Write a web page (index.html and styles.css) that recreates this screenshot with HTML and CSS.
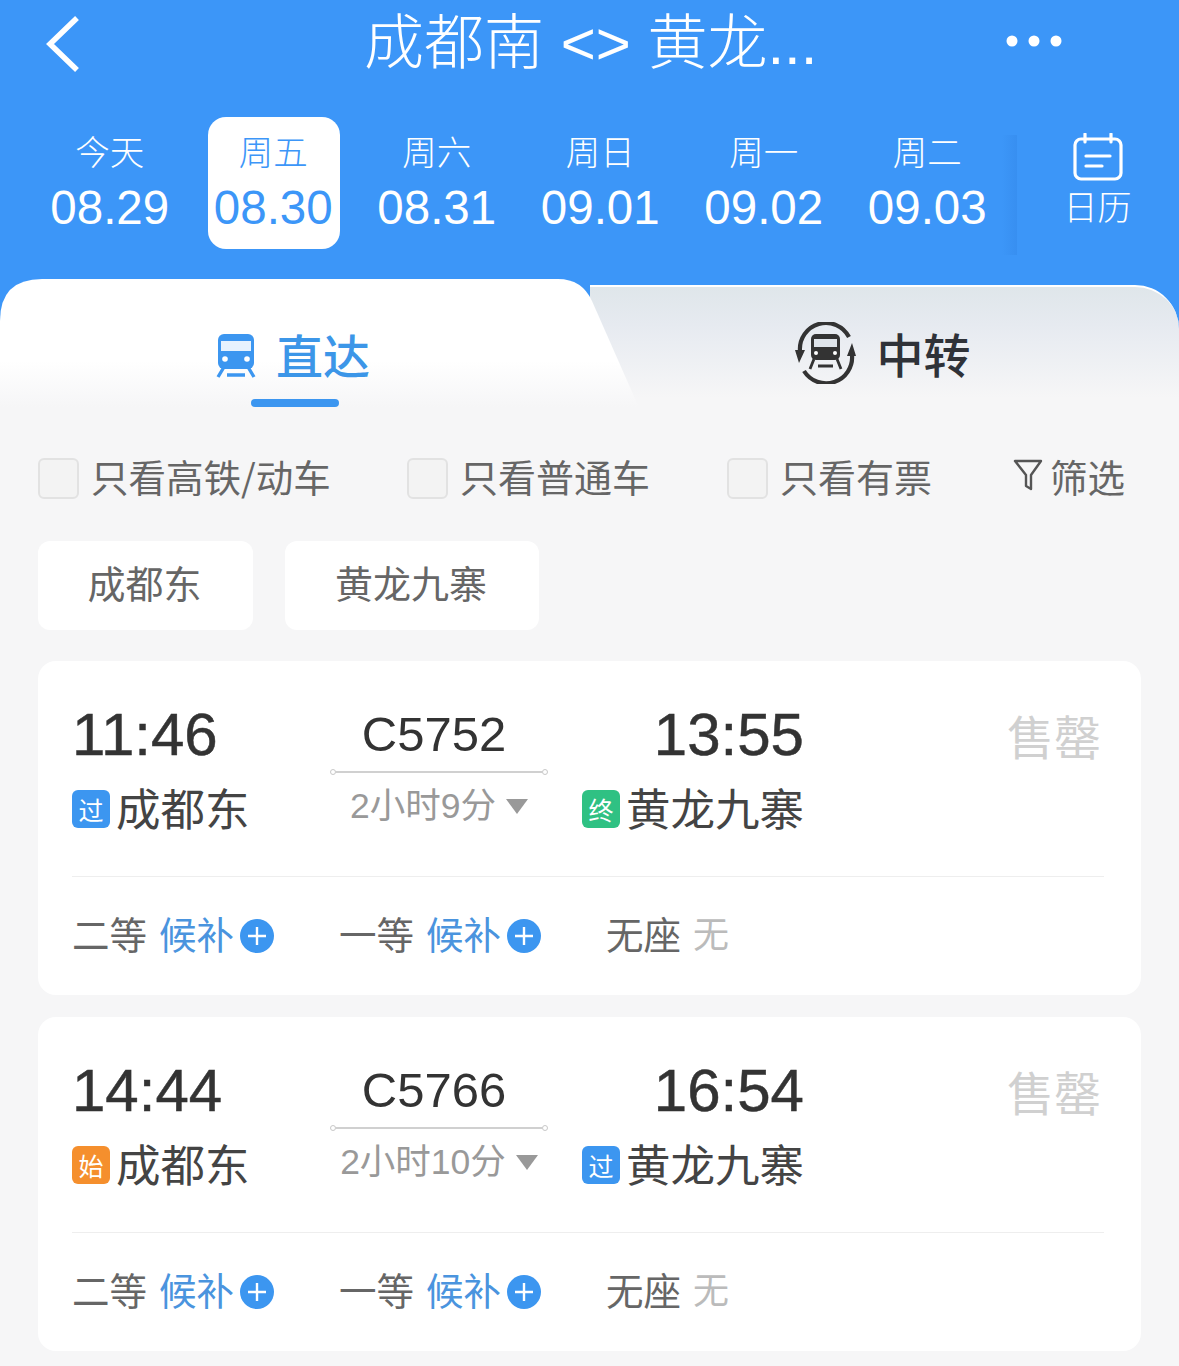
FILE: index.html
```html
<!DOCTYPE html>
<html lang="zh-CN">
<head>
<meta charset="utf-8">
<title>成都南 &lt;&gt; 黄龙九寨</title>
<link rel="stylesheet" href="styles.css">
</head>
<body>
<header class="header">
  <div class="topbar">
    <svg class="back" width="36" height="60" viewBox="0 0 36 60"><path d="M33 4 6 30l27 26" fill="none" stroke="#fff" stroke-width="5.5"/></svg>
    <h1 class="title">成都南 &lt;&gt; 黄龙...</h1>
    <svg class="more" width="58" height="14" viewBox="0 0 58 14"><circle cx="7" cy="7" r="5.5" fill="#fff"/><circle cx="29" cy="7" r="5.5" fill="#fff"/><circle cx="51" cy="7" r="5.5" fill="#fff"/></svg>
  </div>
  <div class="strip">
    <div class="day"><span class="day-label">今天</span><span class="day-date">08.29</span></div>
    <div class="day day-on"><span class="day-label">周五</span><span class="day-date">08.30</span></div>
    <div class="day"><span class="day-label">周六</span><span class="day-date">08.31</span></div>
    <div class="day"><span class="day-label">周日</span><span class="day-date">09.01</span></div>
    <div class="day"><span class="day-label">周一</span><span class="day-date">09.02</span></div>
    <div class="day"><span class="day-label">周二</span><span class="day-date">09.03</span></div>
    <div class="cal">
      <svg width="50" height="48" viewBox="0 0 50 48" fill="none" stroke="#fff" stroke-width="3.2" stroke-linecap="round"><rect x="2" y="6" width="46" height="40" rx="6"/><path d="M12 1v8M38 1v8M13 23h24M13 33h16"/></svg>
      <span class="cal-label">日历</span>
    </div>
  </div>
</header>

<nav class="tabs">
  <div class="tab-side">
    <div class="tab-row">
      <svg class="train" width="40" height="44" viewBox="0 0 40 44"><rect x="2" y="0" width="36" height="35" rx="6" fill="#3c96f0"/><rect x="5" y="7" width="30" height="10" fill="#e6f2fe"/><circle cx="9" cy="25" r="2.8" fill="#fff"/><circle cx="31" cy="25" r="2.8" fill="#fff"/><path d="M8 33 2 43M32 33l6 10M11 41h18" fill="none" stroke="#3c96f0" stroke-width="3.4"/></svg>
      <span class="tab-name tab-blue">直达</span>
    </div>
    <span class="tab-bar"></span>
  </div>
  <div class="tab-side tab-other">
    <div class="tab-row">
      <svg width="62" height="62" viewBox="0 0 62 62"><path d="M5 29A26 26 0 0 1 54 15" fill="none" stroke="#333" stroke-width="4.2"/><path d="M57 33A26 26 0 0 1 9 49" fill="none" stroke="#333" stroke-width="4.2"/><path d="M0 28h10L4 41zM52 34h9l-4-13z" fill="#333"/><rect x="16" y="12" width="29" height="26" rx="5" fill="#333"/><rect x="19" y="17" width="23" height="8" fill="#dfe4ea"/><circle cx="21" cy="31" r="2" fill="#fff"/><circle cx="40" cy="31" r="2" fill="#fff"/><path d="m19 37-4 10M42 37l4 10M23 44h15" fill="none" stroke="#333" stroke-width="2.8"/></svg>
      <span class="tab-name">中转</span>
    </div>
  </div>
</nav>

<main class="main">
  <div class="filters">
    <label class="check check-a"><span class="box"></span>只看高铁/动车</label>
    <label class="check check-b"><span class="box"></span>只看普通车</label>
    <label class="check check-c"><span class="box"></span>只看有票</label>
    <div class="filter-btn">
      <svg width="30" height="32" viewBox="0 0 30 32"><path d="M2 2h26L18 16v14l-5-3V16z" fill="none" stroke="#555" stroke-width="2.4" stroke-linejoin="round"/></svg>
      筛选
    </div>
  </div>
  <div class="chips">
    <span class="chip chip-a">成都东</span>
    <span class="chip chip-b">黄龙九寨</span>
  </div>

  <article class="card">
    <div class="route">
      <div class="end">
        <div class="time">11:46</div>
        <div class="station"><span class="badge b-blue">过</span>成都东</div>
      </div>
      <div class="mid">
        <div class="no">C5752</div>
        <div class="rail"><i class="node"></i><i class="track"></i><i class="node"></i></div>
        <div class="dur">2小时9分<i class="tri"></i></div>
      </div>
      <div class="end end-r">
        <div class="time">13:55</div>
        <div class="station"><span class="badge b-green">终</span>黄龙九寨</div>
      </div>
      <div class="sold">售罄</div>
    </div>
    <div class="seats">
      <div class="seat">二等<span class="wait">候补</span><svg class="plus" width="34" height="34" viewBox="0 0 34 34"><circle cx="17" cy="17" r="17" fill="#3c96f0"/><path d="M8 17h18M17 8v18" stroke="#fff" stroke-width="2.4"/></svg></div>
      <div class="seat">一等<span class="wait">候补</span><svg class="plus" width="34" height="34" viewBox="0 0 34 34"><circle cx="17" cy="17" r="17" fill="#3c96f0"/><path d="M8 17h18M17 8v18" stroke="#fff" stroke-width="2.4"/></svg></div>
      <div class="seat">无座<span class="none">无</span></div>
    </div>
  </article>

  <article class="card">
    <div class="route">
      <div class="end">
        <div class="time">14:44</div>
        <div class="station"><span class="badge b-orange">始</span>成都东</div>
      </div>
      <div class="mid">
        <div class="no">C5766</div>
        <div class="rail"><i class="node"></i><i class="track"></i><i class="node"></i></div>
        <div class="dur">2小时10分<i class="tri"></i></div>
      </div>
      <div class="end end-r">
        <div class="time">16:54</div>
        <div class="station"><span class="badge b-blue">过</span>黄龙九寨</div>
      </div>
      <div class="sold">售罄</div>
    </div>
    <div class="seats">
      <div class="seat">二等<span class="wait">候补</span><svg class="plus" width="34" height="34" viewBox="0 0 34 34"><circle cx="17" cy="17" r="17" fill="#3c96f0"/><path d="M8 17h18M17 8v18" stroke="#fff" stroke-width="2.4"/></svg></div>
      <div class="seat">一等<span class="wait">候补</span><svg class="plus" width="34" height="34" viewBox="0 0 34 34"><circle cx="17" cy="17" r="17" fill="#3c96f0"/><path d="M8 17h18M17 8v18" stroke="#fff" stroke-width="2.4"/></svg></div>
      <div class="seat">无座<span class="none">无</span></div>
    </div>
  </article>
</main>
</body>
</html>
```
FILE: styles.css
```css
* { box-sizing: border-box; }
html, body { margin: 0; padding: 0; }
body {
  width: 1179px;
  height: 1366px;
  overflow: hidden;
  background: #f6f6f7;
  font-family: "Noto Sans CJK SC", "Liberation Sans", sans-serif;
  color: #666;
}
.header {
  height: 279px;
  background: #3c96f8;
  color: #fff;
}
.topbar {
  height: 117px;
  padding: 0 116px 0 44px;
  display: flex;
  align-items: flex-start;
}
.back { margin-top: 14px; }
.more { margin: 34px 0 0 auto; }
.title {
  margin: 0 0 0 284px;
  font-family: "Liberation Sans", "Noto Sans CJK SC", sans-serif;
  font-size: 60px;
  line-height: 88px;
  font-weight: 300;
  white-space: nowrap;
}
.strip {
  display: flex;
  align-items: flex-start;
  padding-left: 28px;
}
.day {
  width: 163.5px;
  height: 132px;
  display: flex;
  flex-direction: column;
  align-items: center;
  padding-top: 10px;
}
.day-on {
  position: relative;
  color: #3c96f8;
}
.day-on::before {
  content: "";
  position: absolute;
  z-index: 0;
  top: 0;
  left: 16px;
  width: 132px;
  height: 132px;
  background: #fff;
  border-radius: 18px;
}
.day-label, .day-date { position: relative; z-index: 1; }
.day-label {
  font-size: 34.5px;
  line-height: 46px;
  font-weight: 300;
}
.day-date {
  font-family: "Liberation Sans", sans-serif;
  font-size: 47.5px;
  line-height: 54px;
  margin-top: 8px;
}
.cal {
  margin: 16px 0 0 7px;
  width: 163px;
  height: 122px;
  display: flex;
  flex-direction: column;
  align-items: center;
  position: relative;
}
.cal::before {
  content: "";
  position: absolute;
  top: 2px;
  bottom: 0;
  left: -14px;
  width: 15px;
  background: linear-gradient(90deg, rgba(25, 95, 190, 0), rgba(25, 95, 190, .13));
}
.cal-label {
  font-size: 34px;
  line-height: 44px;
  margin-top: 3px;
  font-weight: 300;
}
.tabs {
  height: 131px;
  display: flex;
  background: linear-gradient(#3c96f8 50px, #f6f6f7 50px);
}
.tab-side {
  flex: none;
  width: 640px;
  padding: 50px 54px 0 0;
  display: flex;
  flex-direction: column;
  align-items: center;
  background: linear-gradient(#fff 62%, #f6f6f7 98%);
  clip-path: path("M0 131V42Q0 0 42 0H558Q582 0 592 22L640 131Z");
  position: relative;
  z-index: 1;
}
.tab-other {
  margin: 6px 0 0 -50px;
  width: 589px;
  padding: 41px 4px 0 0;
  border-radius: 0 44px 0 0;
  border-top: 2px solid #fff;
  background: linear-gradient(#dfe6ea, #e6eaf0 30%, #f6f6f7 90%);
  clip-path: none;
  z-index: 0;
}
.tab-row {
  display: flex;
  align-items: center;
  gap: 20px;
  height: 50px;
}
.train { margin-top: 4px; }
.tab-name {
  font-size: 47px;
  font-weight: 500;
  line-height: 50px;
  color: #2f3238;
}
.tab-blue { color: #3c96e8; }
.tab-bar {
  width: 88px;
  height: 8px;
  margin: 20px 0 0 4px;
  border-radius: 4px;
  background: #3c96f0;
}
.main { padding: 48px 38px 0; }
.filters {
  display: flex;
  align-items: flex-start;
  height: 41px;
  font-size: 37.5px;
  line-height: 35px;
  white-space: nowrap;
}
.check {
  display: flex;
  align-items: flex-start;
  gap: 12px;
}
.check-a { width: 369px; }
.check-b { width: 320px; font-size: 38px; }
.check-c { width: 286px; font-size: 38px; }
.box {
  width: 41px;
  height: 41px;
  border: 2px solid #e2e2e2;
  border-radius: 6px;
  background: #f3f3f3;
}
.filter-btn {
  display: flex;
  align-items: flex-start;
  gap: 7px;
}
.filter-btn svg { margin-top: 1px; }
.chips {
  display: flex;
  gap: 32px;
  margin-top: 42px;
}
.chip {
  height: 89px;
  padding: 0 2px 9px 0;
  display: flex;
  align-items: center;
  justify-content: center;
  background: #fff;
  border-radius: 12px;
  font-size: 38px;
}
.chip-a { width: 215px; }
.chip-b { width: 254px; }
.card {
  height: 334px;
  margin-top: 31px;
  padding: 40px 37px 0 34px;
  background: #fff;
  border-radius: 18px;
}
.card + .card { margin-top: 22px; }
.route {
  height: 176px;
  display: grid;
  grid-template-columns: 258px 218px 256px 1fr;
  border-bottom: 1.5px solid #eeeeee;
}
.time {
  font-family: "Liberation Sans", sans-serif;
  font-size: 60px;
  line-height: 68px;
  color: #333;
  -webkit-text-stroke: .5px #333;
}
.station {
  display: flex;
  align-items: flex-start;
  gap: 6px;
  margin-top: 14px;
  font-size: 44.5px;
  line-height: 48px;
  color: #444;
  white-space: nowrap;
}
.end-r { text-align: right; }
.end-r .station { justify-content: flex-end; }
.badge {
  flex: none;
  width: 38px;
  height: 38px;
  margin-top: 7px;
  display: flex;
  align-items: center;
  justify-content: center;
  border-radius: 6px;
  color: #fff;
  font-size: 25px;
  line-height: 38px;
}
.b-blue { background: #3c96f0; }
.b-green { background: #2fc183; }
.b-orange { background: #f58f2d; }
.mid { display: flex; flex-direction: column; align-items: center; }
.no {
  font-family: "Liberation Sans", sans-serif;
  font-size: 49px;
  line-height: 64px;
  margin-top: 1px;
  color: #333;
  padding-right: 10px;
}
.rail {
  width: 100%;
  display: flex;
  align-items: center;
  height: 6px;
  margin-top: 3px;
}
.node {
  flex: none;
  width: 6px;
  height: 6px;
  border: 1.5px solid #c8c8c8;
  border-radius: 50%;
}
.track { flex: 1; height: 2px; background: #d0d0d0; }
.dur {
  display: flex;
  align-items: center;
  gap: 10px;
  margin-top: 7px;
  font-size: 35.5px;
  line-height: 48px;
  color: #999;
  font-family: "Liberation Sans", "Noto Sans CJK SC", sans-serif;
}
.tri {
  width: 0;
  height: 0;
  border-left: 11px solid transparent;
  border-right: 11px solid transparent;
  border-top: 15px solid #999;
}
.sold {
  text-align: right;
  padding-right: 3px;
  font-size: 47px;
  line-height: 68px;
  color: #d0d0d0;
}
.seats {
  display: flex;
  align-items: center;
  height: 118px;
  padding-bottom: 8px;
}
.seat {
  width: 267px;
  display: flex;
  align-items: center;
  font-size: 37.5px;
  color: #666;
  white-space: nowrap;
}
.wait { color: #4a94de; margin-left: 12px; }
.none { color: #bbb; margin-left: 12px; font-size: 36px; }
.plus { margin: 8px 0 0 6px; }
```
